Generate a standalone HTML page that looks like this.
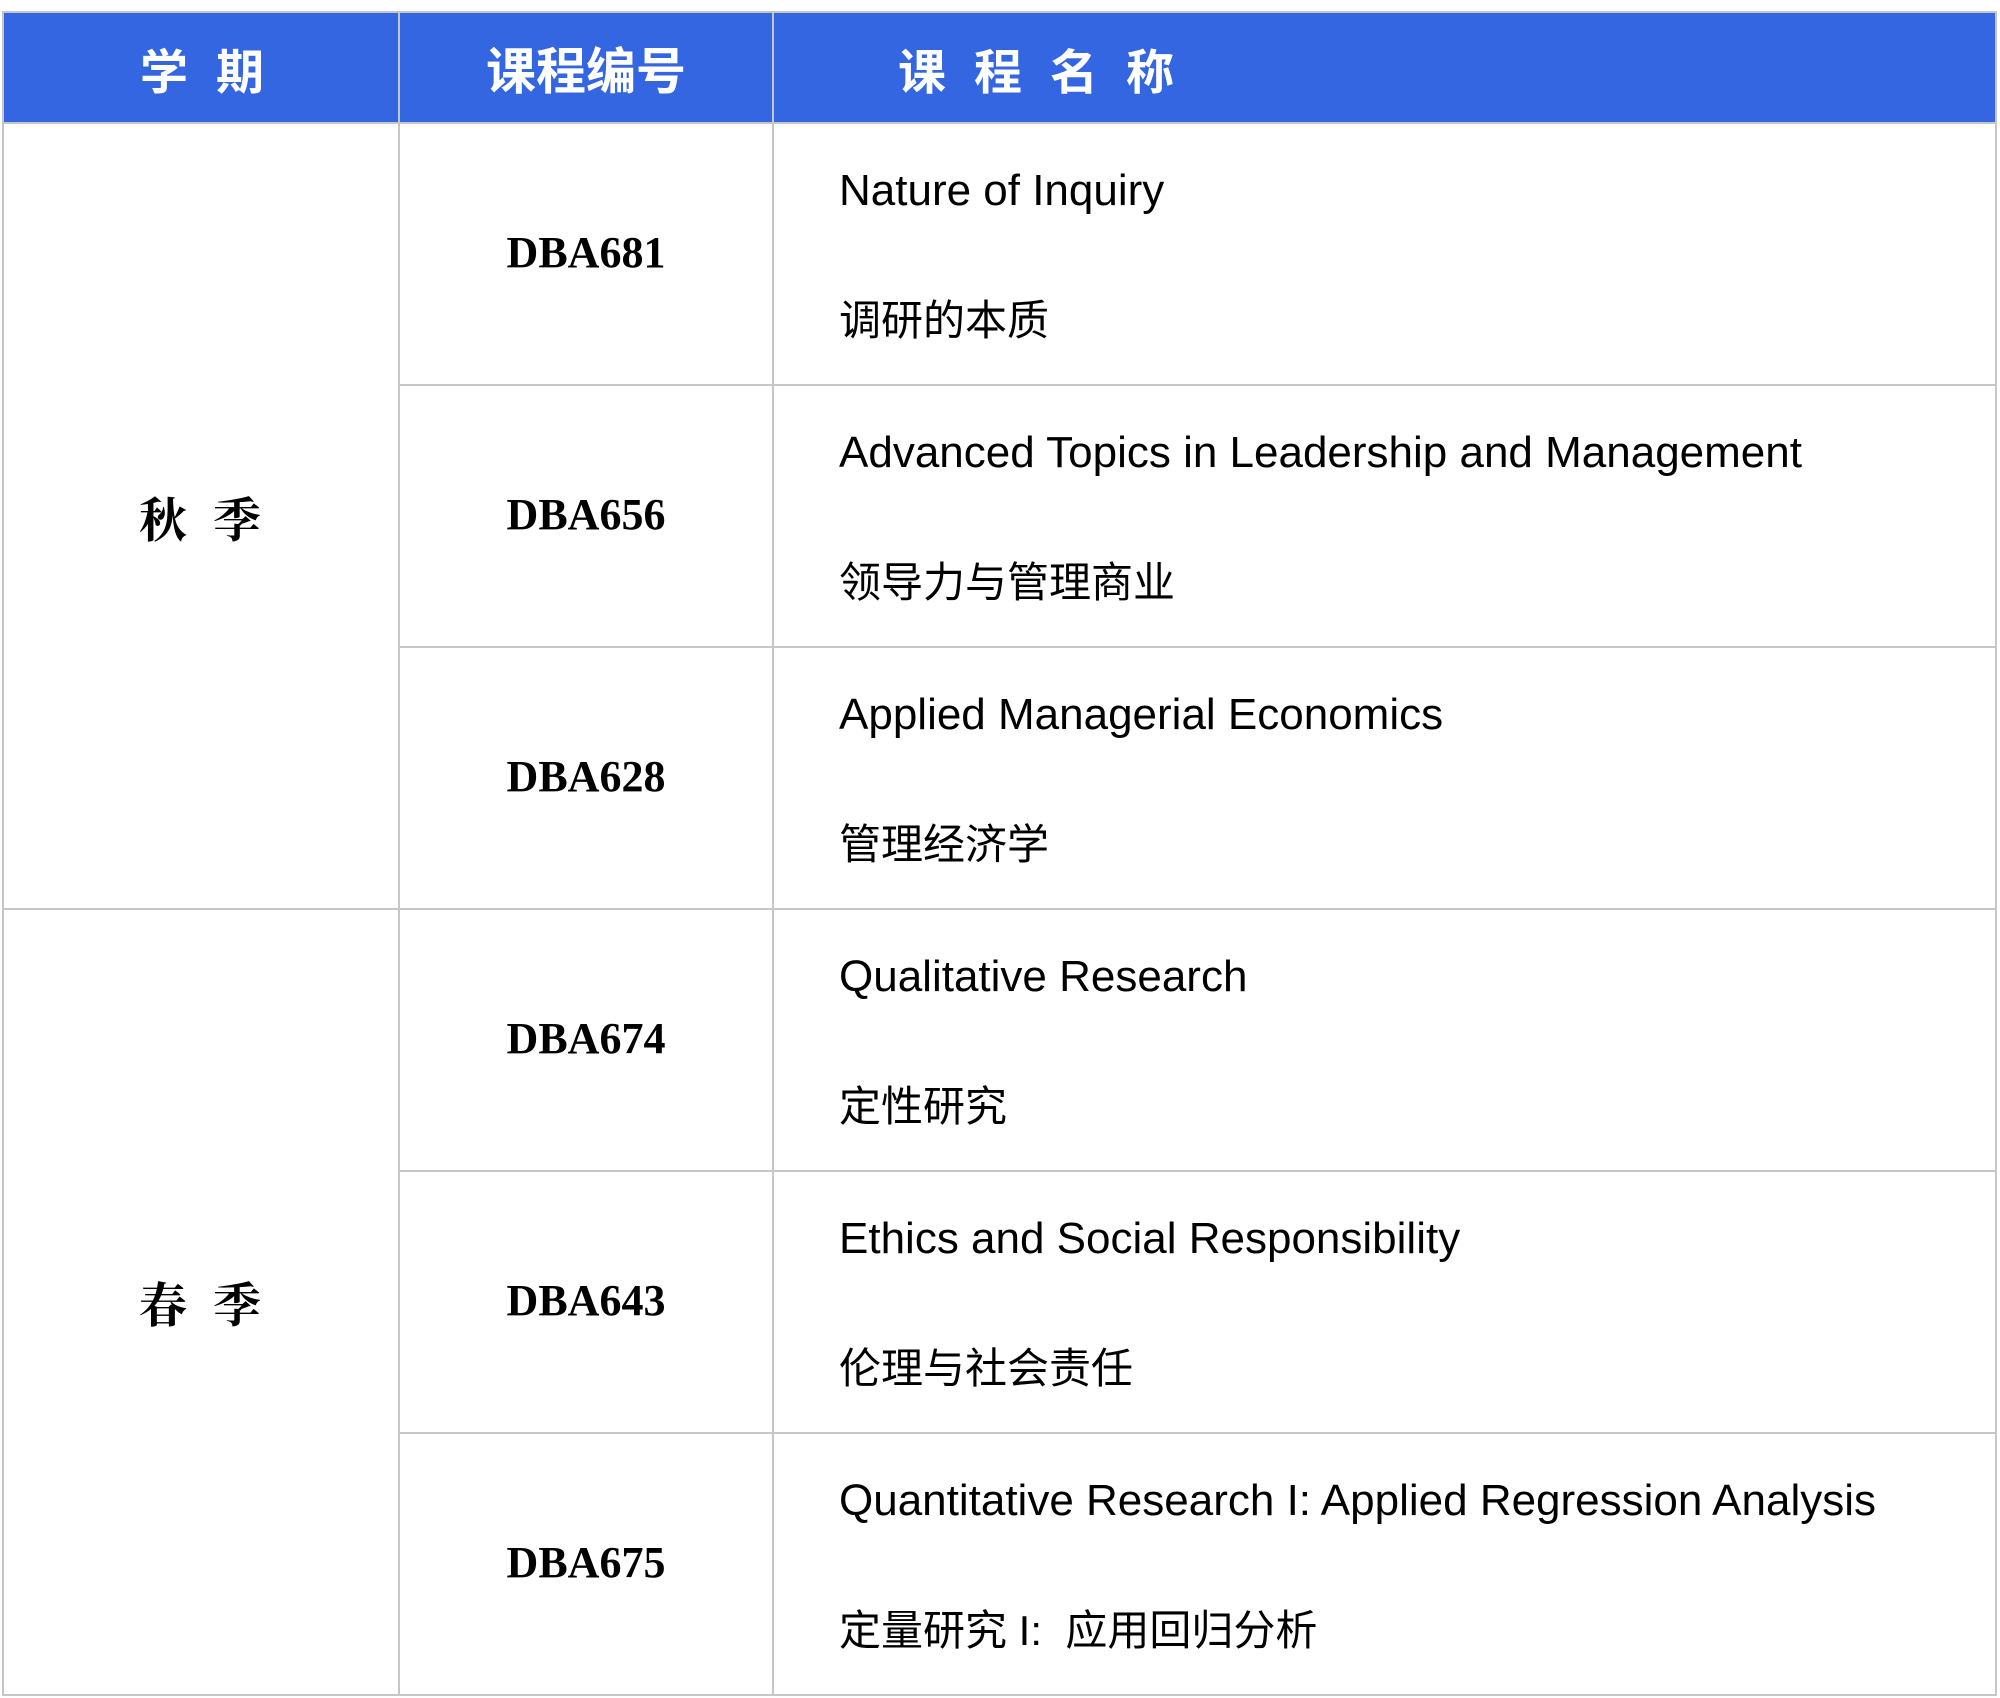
<!DOCTYPE html>
<html><head><meta charset="utf-8"><style>
body{margin:0;width:2000px;height:1698px;background:#fff;position:relative;overflow:hidden}
.h{position:absolute;top:12px;height:111px;background:#3366e0}
.hl{position:absolute;background:#c6c6c6}
.t{position:absolute;white-space:nowrap;line-height:1;transform:translateY(-50%)}
.ht{color:#fff;font-family:"Noto Sans CJK SC",sans-serif;font-weight:700;font-size:48px;top:68px}
.sem{font-family:"Noto Serif CJK SC",serif;font-weight:700;font-size:48px;color:#000;letter-spacing:26px}
.code{font-family:"Liberation Serif",serif;font-weight:700;font-size:44px;color:#000;left:399px;width:374px;text-align:center}
.en{font-family:"Liberation Sans",sans-serif;font-size:44px;color:#000;left:839px}
.zh{font-family:"Liberation Sans","Noto Sans CJK SC",sans-serif;font-size:42px;color:#000;left:839px}
</style></head><body>
<div class="h" style="left:3px;width:1993px"></div>
<div class="hl" style="left:3px;top:11px;width:1993px;height:2px"></div>
<div class="hl" style="left:3px;top:122px;width:1993px;height:2px"></div>
<div class="hl" style="left:399px;top:384px;width:1597px;height:2px"></div>
<div class="hl" style="left:399px;top:646px;width:1597px;height:2px"></div>
<div class="hl" style="left:3px;top:908px;width:1993px;height:2px"></div>
<div class="hl" style="left:399px;top:1170px;width:1597px;height:2px"></div>
<div class="hl" style="left:399px;top:1432px;width:1597px;height:2px"></div>
<div class="hl" style="left:3px;top:1694px;width:1993px;height:2px"></div>
<div class="hl" style="left:2px;top:11px;width:2px;height:1685px"></div>
<div class="hl" style="left:398px;top:11px;width:2px;height:1685px"></div>
<div class="hl" style="left:772px;top:11px;width:2px;height:1685px"></div>
<div class="hl" style="left:1995px;top:11px;width:2px;height:1685px"></div>

<div class="t ht" style="left:140px;letter-spacing:28px">学期</div>
<div class="t ht" style="left:486px;font-size:50px">课程编号</div>
<div class="t ht" style="left:898px;letter-spacing:28px">课程名称</div>

<div class="t sem" style="left:139px;top:517px">秋季</div>
<div class="t sem" style="left:139px;top:1302px">春季</div>

<div class="t code" style="top:253px">DBA681</div>
<div class="t code" style="top:515px">DBA656</div>
<div class="t code" style="top:777px">DBA628</div>
<div class="t code" style="top:1039px">DBA674</div>
<div class="t code" style="top:1301px">DBA643</div>
<div class="t code" style="top:1563px">DBA675</div>

<div class="t en" style="top:191px">Nature of Inquiry</div>
<div class="t zh" style="top:321px">调研的本质</div>
<div class="t en" style="top:453px">Advanced Topics in Leadership and Management</div>
<div class="t zh" style="top:583px">领导力与管理商业</div>
<div class="t en" style="top:715px">Applied Managerial Economics</div>
<div class="t zh" style="top:845px">管理经济学</div>
<div class="t en" style="top:977px">Qualitative Research</div>
<div class="t zh" style="top:1107px">定性研究</div>
<div class="t en" style="top:1239px">Ethics and Social Responsibility</div>
<div class="t zh" style="top:1369px">伦理与社会责任</div>
<div class="t en" style="top:1501px">Quantitative Research I: Applied Regression Analysis</div>
<div class="t zh" style="top:1631px">定量研究 I:&nbsp; 应用回归分析</div>
</body></html>
